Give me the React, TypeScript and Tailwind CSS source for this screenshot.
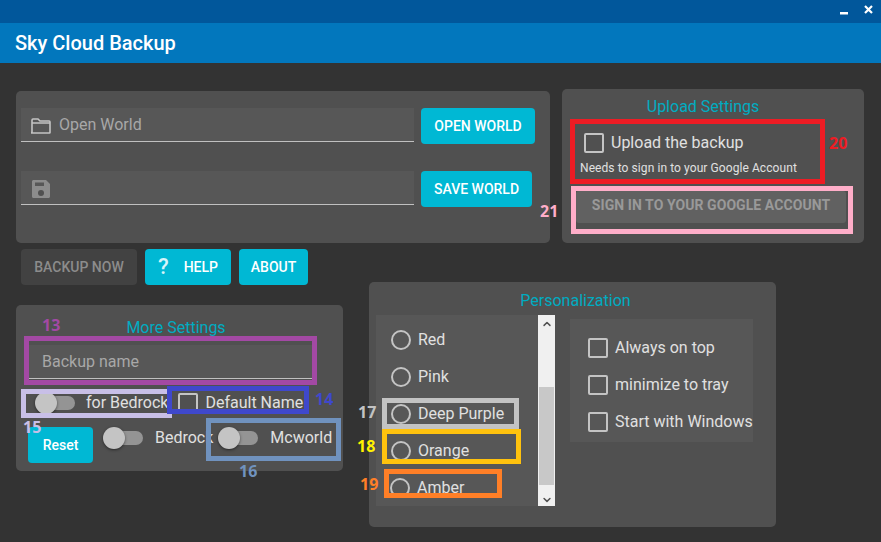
import { ChevronDown, ChevronUp } from "lucide-react";

const Check = ({ label, className = "" }: { label: string; className?: string }) => (
  <div className={`flex items-center ${className}`}>
    <span className="w-5 h-5 border-2 border-[#c4c4c4] rounded-[2px] shrink-0" />
    <span className="ml-[7px] text-base leading-5 text-[#e0e0e0] whitespace-nowrap">{label}</span>
  </div>
);

const Toggle = ({ label, gap = "ml-3", className = "" }: { label: string; gap?: string; className?: string }) => (
  <div className={`flex items-center ${className}`}>
    <span className="relative w-10 h-[22px] shrink-0">
      <span className="absolute left-[2px] right-0 top-1 h-[14px] rounded-full bg-[#949494]" />
      <span className="absolute left-0 top-0 w-[22px] h-[22px] rounded-full bg-[#c4c4c4] shadow-[0_1px_3px_rgba(0,0,0,0.5)]" />
    </span>
    <span className={`${gap} text-base leading-5 text-[#e0e0e0] whitespace-nowrap`}>{label}</span>
  </div>
);

const CyanButton = ({ children, className = "" }: { children: React.ReactNode; className?: string }) => (
  <button className={`h-9 rounded-[4px] bg-[#00b8d4] text-white text-sm font-medium flex items-center justify-center whitespace-nowrap ${className}`}>
    {children}
  </button>
);

const Radio = ({ label, className = "pl-[15px]" }: { label: string; className?: string }) => (
  <div className={`flex items-center h-[37px] shrink-0 ${className}`}>
    <span className="w-5 h-5 rounded-full border-2 border-[#c4c4c4] shrink-0" />
    <span className="ml-[7px] text-base text-[#e0e0e0]">{label}</span>
  </div>
);

const Mark = ({ className }: { className: string }) => (
  <div className={`absolute border-[5px] pointer-events-none ${className}`} />
);

const Tag = ({ text, className }: { text: string; className: string }) => (
  <span className={`absolute text-base leading-5 font-bold font-['Noto_Sans',sans-serif] ${className}`}>{text}</span>
);

export default function App() {
  return (
    <div className="relative w-[881px] h-[542px] overflow-hidden bg-[#333333] font-['Roboto',sans-serif]">
      <div className="h-[23px] bg-[#01579b] flex items-start justify-end pr-2 gap-4 text-white">
        <svg width="8" height="16" viewBox="0 0 8 16" className="mt-0">
          <rect x="0" y="12" width="8" height="2.500" fill="#ffffff" />
        </svg>
        <svg width="9" height="16" viewBox="0 0 9 16">
          <path d="M1 6l7 7M8 6l-7 7" stroke="#ffffff" strokeWidth="2.200" fill="none" />
        </svg>
      </div>
      <div className="h-10 bg-[#0277bd] flex items-center pl-[15px] text-xl font-medium text-white">Sky Cloud Backup</div>

      <div className="pt-[26px] pl-4">
        <div className="flex items-end gap-3">
          <div className="w-[534px] h-[152px] rounded-[5px] bg-[#505050] pl-[5px] pt-[17px]">
            <div className="flex items-start gap-[7px]">
              <div className="w-[393px] h-[34px] bg-[#575757] border-b border-[#c0c0c0] flex items-center pl-[10px] text-base text-[#a8a8a8]">
                <svg width="20" height="16" viewBox="0 0 20 16" className="mt-[3px]" fill="none" stroke="#c4c4c4" strokeWidth="1.6">
                  <path d="M1 14.5V2.2C1 1.5 1.4 1 2 1h5l2 2h9.2c.5 0 .8.4.8 1v10.5c0 .3-.2.5-.5.5h-17.8c-.3 0-.7-.2-.7-.5zM1 5h18" />
                </svg>
                <span className="ml-2">Open World</span>
              </div>
              <CyanButton className="w-[114px]">OPEN WORLD</CyanButton>
            </div>
            <div className="flex items-start gap-[7px] mt-[27px]">
              <div className="w-[393px] h-[34px] bg-[#575757] border-b border-[#c0c0c0] flex items-center pl-[11px]">
                <svg width="18" height="18" viewBox="0 0 18 18" className="mt-[2px]">
                  <path fill="#8c8c8c" d="M1.5 0H14l4 4v12.5c0 .8-.7 1.5-1.500 1.500h-15C.7 18 0 17.300 0 16.500v-15C0 .7.7 0 1.500 0zM3 2.500v3.500h9V2.500H3z" />
                  <circle cx="9" cy="13" r="3" fill="#505050" />
                </svg>
              </div>
              <CyanButton className="w-[111px]">SAVE WORLD</CyanButton>
            </div>
          </div>

          <div className="w-[302px] h-[154px] rounded-[5px] bg-[#505050] pt-[8px]">
            <div className="text-base leading-[19px] text-center text-[#00acc1] pr-5">Upload Settings</div>
            <Check label="Upload the backup" className="mt-[17px] ml-[22px]" />
            <div className="mt-[6px] ml-[18px] text-xs leading-[18px] tracking-[0.08px] text-[#e0e0e0]">Needs to sign in to your Google Account</div>
            <button className="mt-[14px] ml-[14px] w-[270px] h-8 rounded-[3px] bg-[#616161] text-[#999999] text-sm font-bold tracking-[0.07px] flex items-center justify-center pb-[4px]">
              SIGN IN TO YOUR GOOGLE ACCOUNT
            </button>
          </div>
        </div>

        <div className="flex items-start gap-[26px]">
          <div className="w-[327px] shrink-0">
            <div className="flex gap-2 mt-[6px] ml-[5px]">
              <button className="w-[116px] h-9 rounded-[4px] bg-[#424242] text-[#8c8c8c] text-sm font-medium">BACKUP NOW</button>
              <CyanButton className="w-[86px]">
                <span className="text-[22px] font-medium mr-[15px] leading-none text-[#d6f4fa]">?</span>
                HELP
              </CyanButton>
              <CyanButton className="w-[69px]">ABOUT</CyanButton>
            </div>

            <div className="mt-5 h-[166px] rounded-[5px] bg-[#505050] pt-[14px]">
              <div className="text-base leading-[18px] text-center text-[#00acc1] pr-[7px]">More Settings</div>
              <div className="ml-[13px] mt-[8px] w-[283px] h-[34px] bg-[#575757] border-b border-[#c0c0c0] flex items-center pl-[13px] text-base text-[#a8a8a8]">
                Backup name
              </div>
              <div className="flex items-center mt-[13px] ml-[19px]">
                <Toggle label="for Bedrock" gap="ml-[11px]" />
                <Check label="Default Name" className="ml-[10px]" />
              </div>
              <div className="flex items-start mt-[13px] ml-3">
                <CyanButton className="w-[65px]">Reset</CyanButton>
                <Toggle label="Bedrock" className="ml-[10px] mr-[5px]" />
                <Toggle label="Mcworld" />
              </div>
            </div>
          </div>

          <div className="w-[407px] h-[245px] mt-[39px] rounded-[5px] bg-[#505050] pt-[9px] pl-[7px]">
            <div className="text-base leading-[19px] text-center text-[#00acc1] pr-px">Personalization</div>
            <div className="flex items-start mt-[5px]">
              <div className="flex w-[179px] h-[191px]">
                <div className="w-[162px] h-full bg-[#575757] overflow-hidden flex flex-col pt-1.5">
                  {["Red", "Pink", "Deep Purple", "Orange"].map((c) => (
                    <Radio key={c} label={c} />
                  ))}
                  <Radio label="Amber" className="pl-[14px]" />
                </div>
                <div className="w-[17px] h-full bg-[#f0f0f0] flex flex-col items-center">
                  <ChevronUp size={12} strokeWidth={3} className="text-[#505050] mt-[3px]" />
                  <div className="w-[15px] h-[100px] mt-[57px] bg-[#c8c8c8]" />
                  <ChevronDown size={12} strokeWidth={3} className="text-[#505050] mt-[9px]" />
                </div>
              </div>
              <div className="ml-[15px] mt-[4px] w-[183px] h-[123px] bg-[#575757] pl-[18px] pt-[19px] flex flex-col gap-[17px]">
                <Check label="Always on top" />
                <Check label="minimize to tray" />
                <Check label="Start with Windows" />
              </div>
            </div>
          </div>
        </div>
      </div>

      <Mark className="left-[24px] top-[336px] w-[293px] h-[49px] border-[#a349a4]" />
      <Mark className="left-[21px] top-[389px] w-[151px] h-[29px] border-[#c8bfe7]" />
      <Mark className="left-[167px] top-[386px] w-[142px] h-[28px] border-[#3f48cc]" />
      <Mark className="left-[206px] top-[418px] w-[135px] h-[43px] border-[#7092be]" />
      <Mark className="left-[570px] top-[119px] w-[255px] h-[65px] border-[#ed1c24]" />
      <Mark className="left-[571px] top-[186px] w-[282px] h-[48px] border-[#ffaec9]" />
      <Mark className="left-[382px] top-[398px] w-[137px] h-[31px] border-[#c3c3c3]" />
      <Mark className="left-[382px] top-[429px] w-[139px] h-[35px] border-[#ffc20e]" />
      <Mark className="left-[384px] top-[469px] w-[118px] h-[29px] border-[#ff7f27]" />

      <Tag text="13" className="left-[42px] top-[315px] text-[#a349a4]" />
      <Tag text="14" className="left-[315px] top-[389px] text-[#3f48cc]" />
      <Tag text="15" className="left-[23px] top-[417px] text-[#c8bfe7]" />
      <Tag text="16" className="left-[239px] top-[461px] text-[#7092be]" />
      <Tag text="17" className="left-[358px] top-[402px] text-[#c3c3c3]" />
      <Tag text="18" className="left-[357px] top-[436px] text-[#fff200]" />
      <Tag text="19" className="left-[360px] top-[474px] text-[#ff7f27]" />
      <Tag text="20" className="left-[829px] top-[133px] text-[#ed1c24]" />
      <Tag text="21" className="left-[540px] top-[201px] text-[#ffaec9]" />
    </div>
  );
}
